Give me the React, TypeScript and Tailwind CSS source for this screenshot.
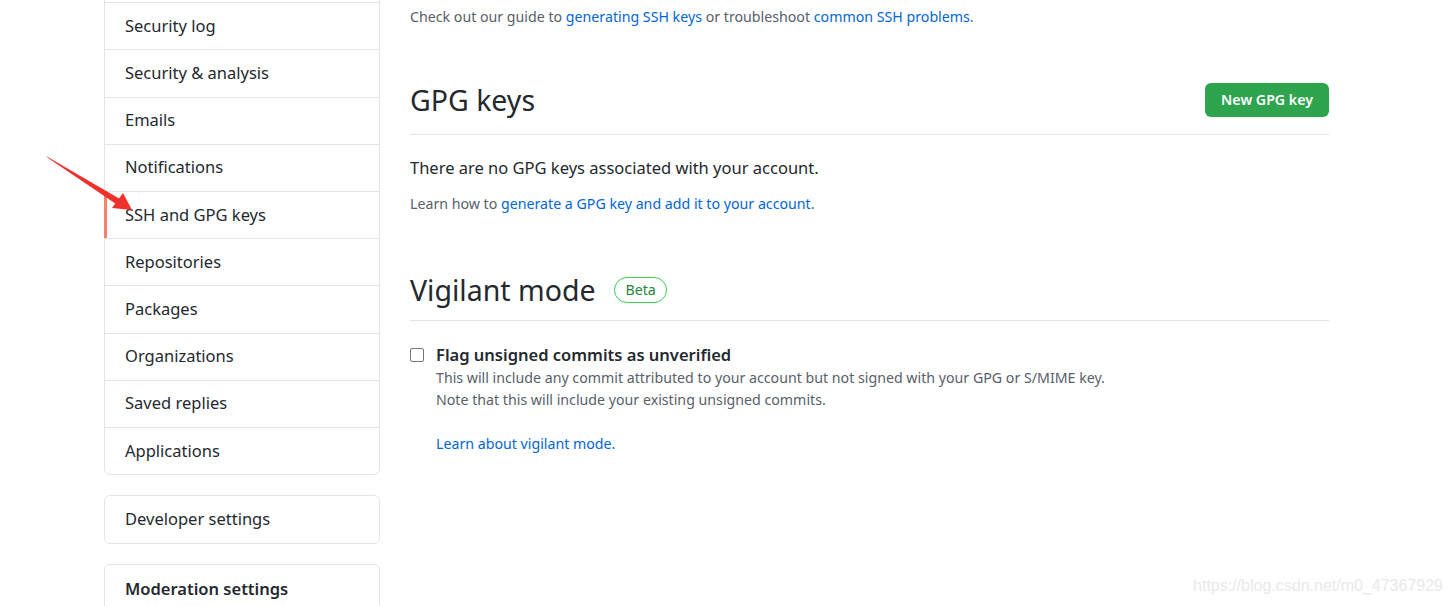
import React from "react";

const navItems = [
  "Security log",
  "Security & analysis",
  "Emails",
  "Notifications",
  "SSH and GPG keys",
  "Repositories",
  "Packages",
  "Organizations",
  "Saved replies",
  "Applications",
];

function NavRow({ label, active, first }: { label: string; active?: boolean; first?: boolean }) {
  return (
    <div
      className={
        "relative flex h-[47.2px] items-center pl-5 text-[16.5px] text-[#24292e] " +
        (first ? "" : "border-t border-[#e1e4e8]")
      }
    >
      {active && <span className="absolute -left-px top-0 bottom-0 w-[3px] bg-[#f9826c]" />}
      {label}
    </div>
  );
}

export default function App() {
  return (
    <div
      className="relative h-[606px] w-[1453px] overflow-hidden bg-white"
      style={{ fontFamily: '"Noto Sans", "Open Sans", Arial, sans-serif' }}
    >
      <div className="flex gap-[30px] pl-[104px]">
        {/* Sidebar */}
        <div className="flex w-[276px] shrink-0 flex-col gap-5">
          <div className="-mt-[46px] rounded-b-md border border-[#e1e4e8]">
            {/* row scrolled out of view */}
            <div className="h-[47.2px]" />
            {navItems.map((item) => (
              <NavRow key={item} label={item} active={item === "SSH and GPG keys"} />
            ))}
          </div>
          <div className="rounded-md border border-[#e1e4e8]">
            <NavRow label="Developer settings" first />
          </div>
          <div className="rounded-md border border-[#e1e4e8]">
            <div className="flex h-[48px] items-center pl-5 text-[16.5px] font-semibold text-[#24292e]">
              Moderation settings
            </div>
          </div>
        </div>

        {/* Main */}
        <div className="w-[919px] shrink-0">
          <p className="mt-[6px] text-[14.2px] leading-[22px] text-[#586069]">
            Check out our guide to <a className="text-[#0366d6]">generating SSH keys</a> or troubleshoot{" "}
            <a className="text-[#0366d6]">common SSH problems</a>.
          </p>

          <div className="mt-[52px] flex items-center justify-between border-b border-[#e1e4e8] pb-[14px]">
            <h2 className="text-[28.5px] font-normal leading-[40px] text-[#24292e]">GPG keys</h2>
            <button className="h-[34px] rounded-md border border-[#28a745]/60 bg-[#2ea44f] px-[15px] text-[14.2px] font-semibold text-white">
              New GPG key
            </button>
          </div>

          <p className="mt-[20px] text-[16.5px] leading-[26px] text-[#24292e]">
            There are no GPG keys associated with your account.
          </p>
          <p className="mt-[12px] text-[14.2px] leading-[22px] text-[#586069]">
            Learn how to <a className="text-[#0366d6]">generate a GPG key and add it to your account</a>.
          </p>

          <div className="mt-[55px] flex items-center gap-[19px] border-b border-[#e1e4e8] pb-[10px]">
            <h2 className="text-[28.5px] font-normal leading-[40px] text-[#24292e]">Vigilant mode</h2>
            <span className="rounded-full border border-[#34d058] px-[10px] text-[14.2px] leading-[24px] text-[#22863a]">
              Beta
            </span>
          </div>

          <div className="mt-[22px] flex gap-3">
            <div className="mt-[5px] h-[14px] w-[14px] shrink-0 rounded-[2px] border border-[#767676] bg-white" />
            <div>
              <div className="text-[16.5px] font-semibold leading-[24px] text-[#24292e]">
                Flag unsigned commits as unverified
              </div>
              <p className="text-[14.2px] leading-[22px] text-[#586069]">
                This will include any commit attributed to your account but not signed with your GPG or S/MIME key.
                <br />
                Note that this will include your existing unsigned commits.
              </p>
              <p className="mt-[22px] text-[14.2px] leading-[22px] text-[#0366d6]">Learn about vigilant mode.</p>
            </div>
          </div>
        </div>
      </div>

      {/* Annotation arrow */}
      <svg className="pointer-events-none absolute left-0 top-0" width="160" height="230">
        <polygon points="46,156 48,158 116,204 120,199" fill="#f0302a" />
        <polygon points="132,210 112,208 123,193" fill="#f0302a" />
      </svg>

      {/* Watermark */}
      <div
        className="absolute bottom-[8px] right-[10px] text-[16px] text-[#e9e9e9]"
        style={{ fontFamily: '"Liberation Sans", Arial, sans-serif' }}
      >
        https://blog.csdn.net/m0_47367929
      </div>
    </div>
  );
}
